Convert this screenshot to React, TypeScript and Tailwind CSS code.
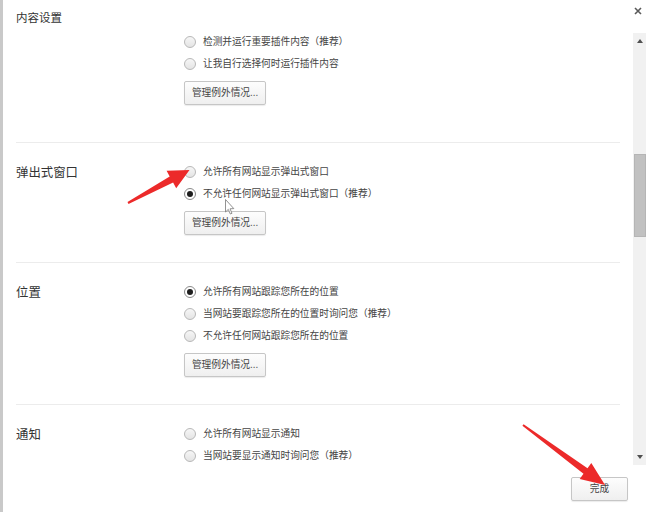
import React from "react";

const FONT = { fontFamily: '"Noto Sans CJK SC", "Noto Sans", sans-serif' };

function Radio({ checked }: { checked?: boolean }) {
  return checked ? (
    <span className="w-[12px] h-[12px] rounded-full border border-[#8a8a8a] bg-white flex items-center justify-center shrink-0">
      <span className="w-[6px] h-[6px] rounded-full bg-[#1e1e1e]" />
    </span>
  ) : (
    <span className="w-[12px] h-[12px] rounded-full border border-[#b8b8b8] bg-linear-to-b from-[#f6f6f6] to-[#e4e4e4] shrink-0" />
  );
}

function Row({ text, checked }: { text: string; checked?: boolean }) {
  return (
    <div className="h-[22px] flex items-center gap-[7px]">
      <Radio checked={checked} />
      <span className="text-[9.7px] text-[#444] leading-none whitespace-nowrap">{text}</span>
    </div>
  );
}

function Btn({ children, w }: { children: React.ReactNode; w: string }) {
  return (
    <div
      className={`${w} h-[24px] border border-[#c6c6c6] rounded-[2px] bg-linear-to-b from-[#fdfdfd] to-[#efefef] shadow-[0_1px_1px_rgba(0,0,0,0.08)] flex items-center justify-center text-[9.7px] text-[#444] leading-none`}
    >
      {children}
    </div>
  );
}

function Section({
  label,
  rows,
  button,
  top,
  className,
}: {
  label?: string;
  rows: { t: string; c?: boolean }[];
  button?: boolean;
  top?: boolean;
  className: string;
}) {
  return (
    <div className={`mx-[13px] flex ${top ? "" : "border-t border-[#ececec]"} ${className}`}>
      <div className="w-[168px] shrink-0 text-[12.4px] text-[#333] leading-[22px]">{label}</div>
      <div className="flex flex-col">
        {rows.map((r, i) => (
          <Row key={i} text={r.t} checked={r.c} />
        ))}
        {button && (
          <div className="mt-[6px]">
            <Btn w="w-[82px]">管理例外情况...</Btn>
          </div>
        )}
      </div>
    </div>
  );
}

export default function App() {
  return (
    <div className="w-[646px] h-[512px] bg-white relative overflow-hidden flex border-l-[3px] border-[#c9c9c9]" style={FONT}>
      <div className="flex-1 flex flex-col">
        <div className="h-[31px] pl-[13px] pt-[10px] text-[11.5px] leading-[14px] text-[#333] shrink-0">内容设置</div>
        <div className="h-[434px] overflow-hidden shrink-0">
          <Section
            top
            className="pb-[37px]"
            rows={[{ t: "检测并运行重要插件内容（推荐）" }, { t: "让我自行选择何时运行插件内容" }]}
            button
          />
          <Section
            className="pt-[18px] pb-[27px]"
            label="弹出式窗口"
            rows={[{ t: "允许所有网站显示弹出式窗口" }, { t: "不允许任何网站显示弹出式窗口（推荐）", c: true }]}
            button
          />
          <Section
            className="pt-[18px] pb-[27px]"
            label="位置"
            rows={[
              { t: "允许所有网站跟踪您所在的位置", c: true },
              { t: "当网站要跟踪您所在的位置时询问您（推荐）" },
              { t: "不允许任何网站跟踪您所在的位置" },
            ]}
            button
          />
          <Section
            className="pt-[18px] pb-[27px]"
            label="通知"
            rows={[{ t: "允许所有网站显示通知" }, { t: "当网站要显示通知时询问您（推荐）" }]}
          />
        </div>
        <div className="flex justify-end pr-[5px] pt-[12px]">
          <Btn w="w-[57px]">完成</Btn>
        </div>
      </div>
      <div className="w-[13px] flex flex-col shrink-0">
        <div className="h-[33px] pt-[7px] pl-[1px]">
          <svg width="8" height="8" viewBox="0 0 8 8">
            <path d="M1 1L7 7M7 1L1 7" stroke="#5a5a5a" strokeWidth="1.6" />
          </svg>
        </div>
        <div className="h-[432px] bg-[#f1f1f1] flex flex-col items-center">
          <div className="h-[16px] flex items-center justify-center">
            <svg width="6" height="4" viewBox="0 0 6 4">
              <path d="M0 4L3 0L6 4Z" fill="#505050" />
            </svg>
          </div>
          <div className="h-[105px]" />
          <div className="w-[12px] h-[83px] bg-[#c1c1c1] border border-[#b5b5b5]" />
          <div className="flex-1" />
          <div className="h-[16px] flex items-center justify-center">
            <svg width="6" height="4" viewBox="0 0 6 4">
              <path d="M0 0L6 0L3 4Z" fill="#505050" />
            </svg>
          </div>
        </div>
      </div>

      {/* annotation overlay */}
      <svg className="absolute left-0 top-0 pointer-events-none" width="646" height="512" viewBox="0 0 646 512">
        <path
          d="M125.5 203.9 L170.1 182.6 L173.2 188.3 L186.5 170 L163.6 170.7 L166.7 176.4 L124.5 202.1 Z"
          fill="#ec2a2a"
        />
        <path
          d="M519.4 425.8 L580.5 473.8 L576.7 479.1 L602 485 L588.3 462.9 L584.5 468.2 L520.6 424.2 Z"
          fill="#ec2a2a"
        />
        <path
          d="M222.5 199.5 L222.5 212 L225.3 209.4 L227.3 214 L229 213.3 L227 208.8 L230.8 208.6 Z"
          fill="#ffffff"
          stroke="#777"
          strokeWidth="0.8"
        />
      </svg>
    </div>
  );
}
